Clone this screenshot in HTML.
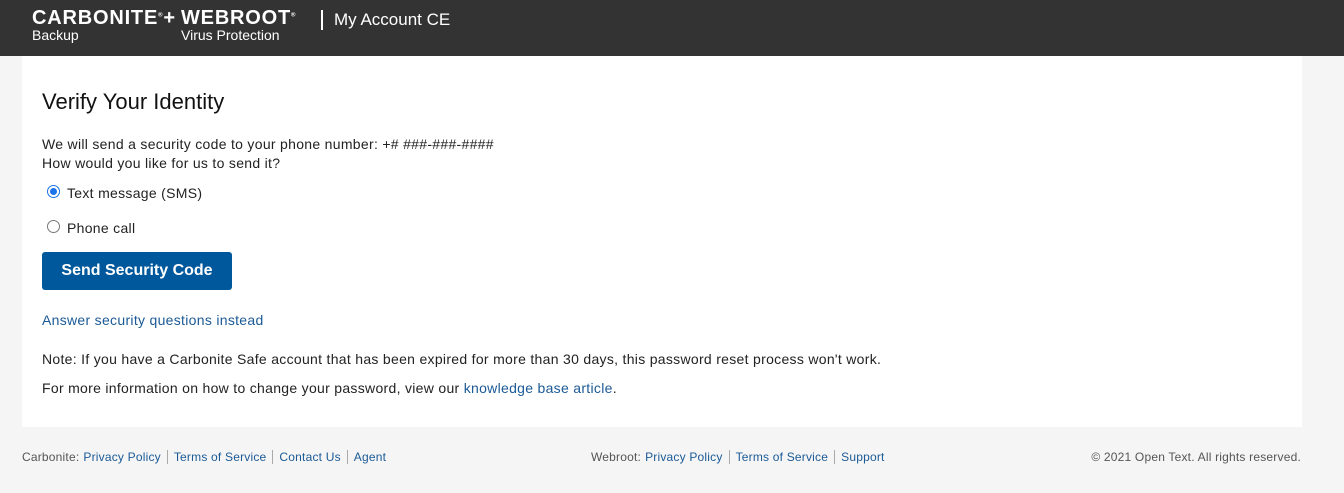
<!DOCTYPE html>
<html><head><meta charset="utf-8"><style>
*{margin:0;padding:0;box-sizing:border-box}
body{width:1344px;height:493px;background:#f5f5f5;font-family:"Liberation Sans",sans-serif;color:#222;overflow:hidden;position:relative}
.hdr{height:56px;background:#333;position:relative;color:#fff}
.hdr .a{position:absolute;left:32px;top:7px;font-weight:bold;font-size:20px;letter-spacing:0.8px}
.hdr .b{position:absolute;left:181px;top:7px;font-weight:bold;font-size:20px;letter-spacing:0.8px}
.hdr .s1{position:absolute;left:32px;top:27px;font-size:14px}
.hdr .s2{position:absolute;left:181px;top:27px;font-size:14px}
.hdr .bar{position:absolute;left:321px;top:10px;width:2px;height:20px;background:#fff}
.hdr .ma{position:absolute;left:334px;top:10px;font-size:17px}
.card{position:absolute;left:22px;top:56px;width:1280px;height:371px;background:#fff}
.abs{position:absolute;white-space:nowrap;font-size:14px;letter-spacing:0.3px}
h1{position:absolute;left:20px;top:33px;font-size:22px;font-weight:normal;color:#111}
.radio{position:absolute;width:13px;height:13px;border-radius:50%;border:1px solid #777;background:#fff}
.radio.on{border:1px solid #1a73e8}
.radio.on::after{content:"";position:absolute;left:2px;top:2px;width:7px;height:7px;border-radius:50%;background:#1a73e8}
.btn{position:absolute;left:20px;top:196px;width:190px;height:38px;background:#00589c;border-radius:3px;color:#fff;font-weight:bold;font-size:16px;text-align:center;line-height:38px}
a{color:#1b5a96;text-decoration:none}
.ft{position:absolute;top:450px;font-size:12px;color:#555;white-space:nowrap;letter-spacing:0.2px}
.ft a{color:#1b5a96;padding:0 6px;border-right:1px solid #aaa}
.ft a:last-child{border-right:none}
</style></head><body>
<div class="hdr">
<div class="a">CARBONITE<sup style="font-size:6px">®</sup>+</div>
<div class="b">WEBROOT<sup style="font-size:6px">®</sup></div>
<div class="s1">Backup</div><div class="s2">Virus Protection</div>
<div class="bar"></div><div class="ma">My Account CE</div>
</div>
<div class="card">
<h1>Verify Your Identity</h1>
<div class="abs" style="left:20px;top:80px">We will send a security code to your phone number: +# ###-###-####</div>
<div class="abs" style="left:20px;top:99px">How would you like for us to send it?</div>
<div class="radio on" style="left:25px;top:129px"></div>
<div class="abs" style="left:45px;top:129px">Text message (SMS)</div>
<div class="radio" style="left:25px;top:164px"></div>
<div class="abs" style="left:45px;top:164px">Phone call</div>
<div class="btn">Send Security Code</div>
<div class="abs" style="left:20px;top:256px"><a>Answer security questions instead</a></div>
<div class="abs" style="left:20px;top:295px">Note: If you have a Carbonite Safe account that has been expired for more than 30 days, this password reset process won't work.</div>
<div class="abs" style="left:20px;top:324px">For more information on how to change your password, view our <a>knowledge base article</a>.</div>
</div>
<div class="ft" style="left:22px">Carbonite:<a style="padding-left:4px">Privacy Policy</a><a>Terms of Service</a><a>Contact Us</a><a>Agent</a></div>
<div class="ft" style="left:591px">Webroot:<a style="padding-left:4px">Privacy Policy</a><a>Terms of Service</a><a>Support</a></div>
<div class="ft" style="right:43px">© 2021 Open Text. All rights reserved.</div>
</body></html>
